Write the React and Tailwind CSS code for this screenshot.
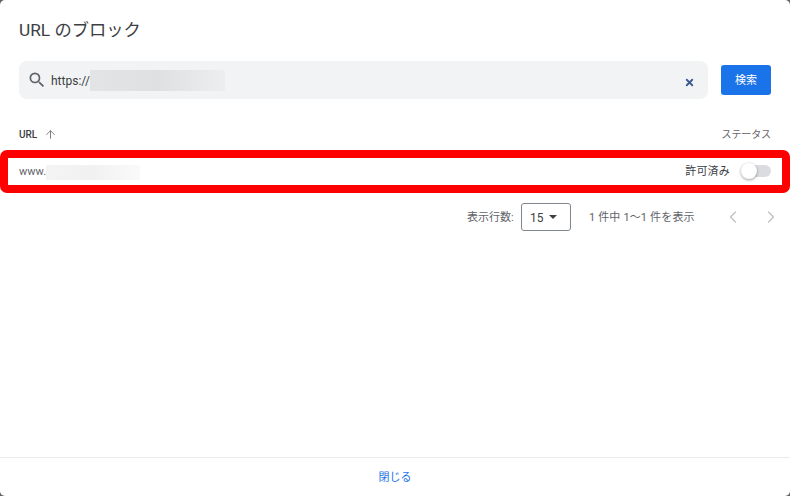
import React from "react";
import { ArrowUp, X, ChevronLeft, ChevronRight } from "lucide-react";

const font = "font-['Roboto','Noto_Sans_CJK_JP',sans-serif]";

export default function App() {
  return (
    <div className="w-[790px] h-[496px] bg-[#5f6368] overflow-hidden">
      <div className={`w-full h-full bg-white rounded-[5px] flex flex-col ${font}`}>
        <h1 className="pl-[19px] pt-[18px] h-[61px] text-[17.3px] leading-[24px] text-[#3c4043] font-normal">
          URL のブロック
        </h1>

        <div className="flex items-center pl-[19px] pr-[19px] gap-[13px]">
          <div className="flex-1 h-[38px] bg-[#f1f3f4] rounded-[8px] flex items-center pl-[8px] pr-[13px]">
            <svg width="20" height="20" viewBox="0 0 24 24" className="text-[#5f6368]" fill="currentColor">
              <path d="M15.5 14h-.79l-.28-.27A6.47 6.47 0 0 0 16 9.5 6.5 6.5 0 1 0 9.5 16c1.61 0 3.09-.59 4.23-1.57l.27.28v.79l5 4.99L20.49 19l-4.99-5zm-6 0C7.01 14 5 11.99 5 9.5S7.01 5 9.5 5 14 7.01 14 9.5 11.99 14 9.5 14z" />
            </svg>
            <span className="ml-[4px] pt-[1px] text-[12px] text-[#3c4043]">https://</span>
            <div className="w-[135px] h-[21px] bg-gradient-to-r from-[#e3e4e6] via-[#dfe0e2] to-[#eceef0]"></div>
            <X size={11} strokeWidth={4} className="ml-auto mt-[5px] text-[#3b5a93]" />
          </div>
          <button className="w-[50px] h-[30px] pt-[3px] bg-[#1a73e8] rounded-[3px] text-white text-[11px]">検索</button>
        </div>

        <div className="flex items-center justify-between pl-[19px] pr-[19px] mt-[25px] h-[20px]">
          <div className="flex items-center gap-[7px]">
            <span className="text-[10px] font-medium text-[#3c4043]">URL</span>
            <ArrowUp size={13} strokeWidth={1.5} className="text-[#5f6368]" />
          </div>
          <span className="text-[10px] tracking-[-0.1px] text-[#5f6368]">ステータス</span>
        </div>

        <div className="mt-[6px] h-[43px] border-[8px] border-[#ff0000] rounded-[7px] bg-white flex items-center justify-between pl-[11px] pr-[11px]">
          <div className="flex items-center">
            <span className="pt-[2px] text-[11px] text-[#5f6368]">www.</span>
            <div className="w-[94px] h-[15px] mt-[1px] bg-gradient-to-r from-[#f4f4f4] via-[#f1f1f1] to-[#fafafa]"></div>
          </div>
          <div className="flex items-center gap-[12px]">
            <span className="pt-[1px] text-[11px] tracking-[0.2px] text-[#3c4043]">許可済み</span>
            <div className="relative w-[29px] h-[12px] -mt-[2px] bg-[#dadce0] rounded-full">
              <div className="absolute -left-[1px] -top-[2px] w-[16px] h-[16px] bg-white rounded-full shadow-[0_1px_3px_rgba(0,0,0,0.4)]"></div>
            </div>
          </div>
        </div>

        <div className="flex items-center mt-[10px] h-[28px] pl-[467px]">
          <span className="text-[11px] text-[#5f6368] w-[54px] pt-[2px]">表示行数:</span>
          <div className="w-[50px] h-[28px] border border-[#80868b] rounded-[3px] flex items-center pl-[8px] gap-[5px]">
            <span className="pt-[1px] text-[12px] text-[#3c4043]">15</span>
            <div className="w-0 h-0 border-l-[4px] border-r-[4px] border-t-[4px] border-l-transparent border-r-transparent border-t-[#3c4043]"></div>
          </div>
          <span className="ml-[18px] w-[115px] pt-[2px] text-[11px] tracking-[0.15px] text-[#5f6368]">1 件中 1〜1 件を表示</span>
          <ChevronLeft size={20} strokeWidth={1.5} className="ml-[19px] text-[#bdc1c6]" />
          <ChevronRight size={20} strokeWidth={1.5} className="ml-[18px] text-[#bdc1c6]" />
        </div>

        <div className="mt-auto h-[39px] pt-[2px] border-t border-[#e8eaed] flex items-center justify-center">
          <span className="text-[11px] text-[#1a73e8]">閉じる</span>
        </div>
      </div>
    </div>
  );
}
